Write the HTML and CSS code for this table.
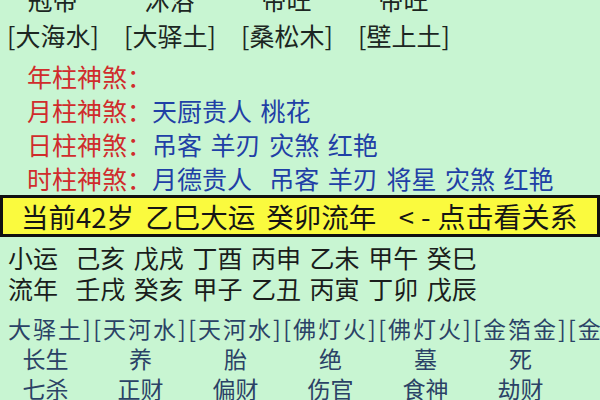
FILE: index.html
```html
<!DOCTYPE html>
<html lang="zh">
<head>
<meta charset="utf-8">
<link rel="stylesheet" href="styles.css">
</head>
<body>
<div class="page">
  <div class="pillars">
    <div class="cell">冠带</div>
    <div class="cell">沐浴</div>
    <div class="cell">帝旺</div>
    <div class="cell">帝旺</div>
    <div class="cell">[大海水]</div>
    <div class="cell">[大驿土]</div>
    <div class="cell">[桑松木]</div>
    <div class="cell">[壁上土]</div>
  </div>

  <div class="shensha">
    <div class="ss-row"><span class="ss-label">年柱神煞：</span></div>
    <div class="ss-row"><span class="ss-label">月柱神煞：</span><span class="ss-val">天厨贵人 桃花</span></div>
    <div class="ss-row"><span class="ss-label">日柱神煞：</span><span class="ss-val">吊客 羊刃 灾煞 红艳</span></div>
    <div class="ss-row"><span class="ss-label">时柱神煞：</span><span class="ss-val">月德贵人  吊客 羊刃 将星 灾煞 红艳</span></div>
  </div>

  <div class="current">当前42岁 乙巳大运 癸卯流年  <span class="arrow">&lt;-</span><span class="hint">点击看关系</span></div>

  <div class="yun">
    <div class="yun-row">小运  己亥 戊戌 丁酉 丙申 乙未 甲午 癸巳</div>
    <div class="yun-row">流年  壬戌 癸亥 甲子 乙丑 丙寅 丁卯 戊辰</div>
  </div>

  <div class="table">
    <div class="t-cell nayin"><span class="cut">[</span>大驿土]</div>
    <div class="t-cell nayin">[天河水]</div>
    <div class="t-cell nayin">[天河水]</div>
    <div class="t-cell nayin">[佛灯火]</div>
    <div class="t-cell nayin">[佛灯火]</div>
    <div class="t-cell nayin">[金箔金]</div>
    <div class="t-cell nayin edge">[金箔金]</div>

    <div class="t-cell">长生</div>
    <div class="t-cell">养</div>
    <div class="t-cell">胎</div>
    <div class="t-cell">绝</div>
    <div class="t-cell">墓</div>
    <div class="t-cell">死</div>
    <div class="t-cell"></div>

    <div class="t-cell">七杀</div>
    <div class="t-cell">正财</div>
    <div class="t-cell">偏财</div>
    <div class="t-cell">伤官</div>
    <div class="t-cell">食神</div>
    <div class="t-cell">劫财</div>
    <div class="t-cell"></div>
  </div>
</div>
</body>
</html>
```

FILE: styles.css
```css
html, body {
  margin: 0;
  padding: 0;
  width: 600px;
  height: 400px;
  overflow: hidden;
  background: #c8f5d2;
}

.page {
  font-family: "Noto Sans CJK SC", "Noto Sans", sans-serif;
  color: #1c2622;
  width: 600px;
  height: 400px;
  overflow: hidden;
}

.pillars {
  display: grid;
  grid-template-columns: repeat(4, 91px);
  column-gap: 26px;
  padding-left: 7px;
  margin-top: -19px;
  font-size: 25px;
  line-height: 36px;
}

.cell {
  text-align: center;
  white-space: nowrap;
}

.shensha {
  margin-top: 6px;
  padding-left: 27px;
  font-size: 25px;
  line-height: 34px;
}

.ss-row {
  white-space: pre;
  word-spacing: 3px;
}

.ss-label {
  color: #d02c2c;
}

.ss-val {
  color: #1f40a6;
}

.current {
  background: #fafa3e;
  border: 3px solid #111;
  height: 35px;
  line-height: 35px;
  padding-top: 1px;
  box-sizing: content-box;
  padding-left: 18px;
  font-size: 27.5px;
  color: #151515;
  white-space: pre;
  word-spacing: 5px;
}

.arrow {
  letter-spacing: 7px;
}

.hint {
  font-size: 28px;
}

.yun {
  margin-top: 5px;
  padding-left: 8px;
  font-size: 25px;
  line-height: 31px;
  color: #1a1d1c;
}

.yun-row {
  white-space: pre;
  word-spacing: 3px;
}

.table {
  display: grid;
  grid-template-columns: repeat(7, 95px);
  margin-top: 9px;
  margin-left: -2px;
  font-size: 23px;
  line-height: 30px;
  color: #2b4266;
}

.t-cell {
  text-align: center;
  white-space: nowrap;
  height: 30px;
}

.nayin {
  letter-spacing: 2px;
}

.edge {
  text-align: left;
}

.cut {
  visibility: hidden;
}
```
